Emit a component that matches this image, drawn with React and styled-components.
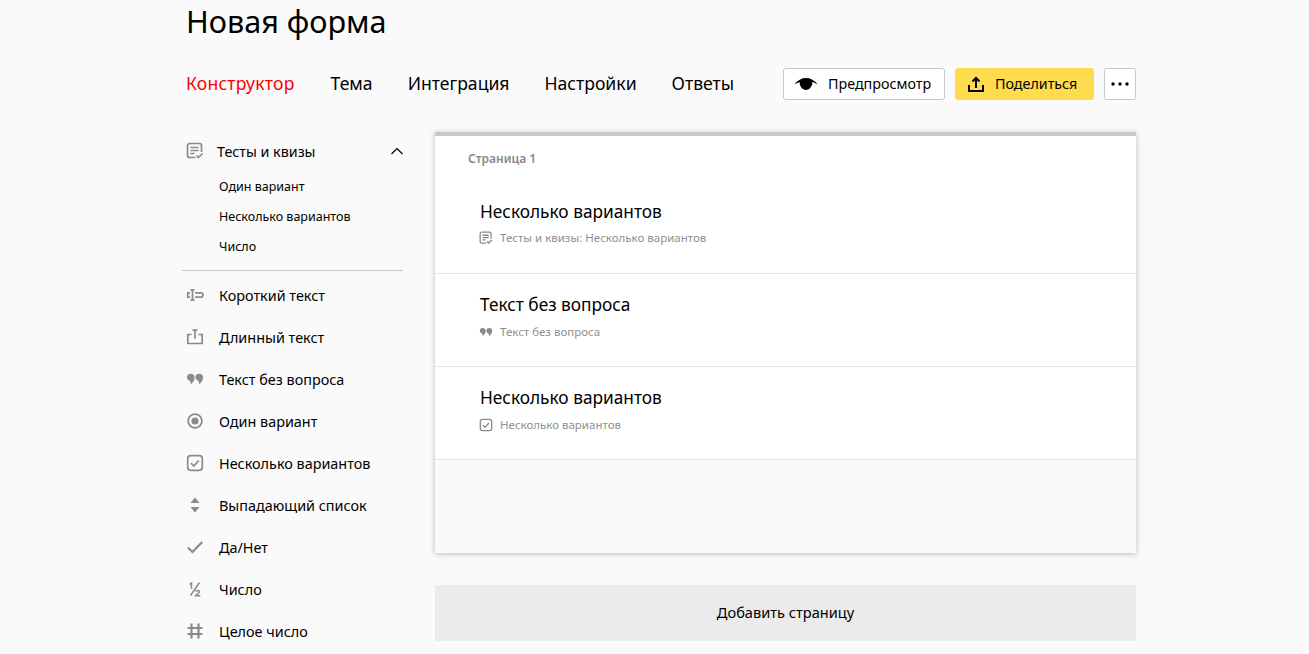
import React from 'react'
import styled, { createGlobalStyle } from 'styled-components'

const GlobalStyle = createGlobalStyle`
  html, body {
    margin: 0;
    padding: 0;
    height: 654px;
    overflow: hidden;
    background: #fafafa;
    font-family: "Noto Sans", "Open Sans", sans-serif;
    color: #000;
  }
  * { box-sizing: border-box; }
`

const Page = styled.div`
  width: 950px;
  margin-left: 186px;
`

const Title = styled.h1`
  margin: 0;
  padding-top: 1px;
  height: 68px;
  font-size: 30.6px;
  line-height: 40px;
  font-weight: 400;
`

const TopBar = styled.div`
  display: flex;
  align-items: center;
  justify-content: space-between;
  height: 32px;
`

const Tabs = styled.nav`
  display: flex;
  gap: 35px;
`

const Tab = styled.span`
  font-size: 17.6px;
  line-height: 30px;
  padding-bottom: 2px;
  color: ${p => (p.$active ? '#f00' : '#000')};
  letter-spacing: ${p => (p.$active ? '0.2px' : '0')};
  margin-right: ${p => (p.$active ? '1px' : '0')};
`

const Actions = styled.div`
  display: flex;
  gap: 10px;
`

const Button = styled.button`
  display: flex;
  align-items: center;
  height: 32px;
  width: ${p => p.$width}px;
  padding: 0 0 1px ${p => p.$pad}px;
  gap: ${p => p.$gap}px;
  font: inherit;
  font-size: 14.3px;
  color: #000;
  border-radius: 3px;
  border: ${p => (p.$primary ? 'none' : '1px solid #c8c8c8')};
  background: ${p => (p.$primary ? '#ffdb4d' : '#fff')};
`

const Columns = styled.div`
  display: flex;
  margin-top: 32px;
  margin-left: -4px;
  gap: 32px;
`

const Sidebar = styled.aside`
  width: 221px;
  flex: none;
`

const Group = styled.div`
  display: flex;
  align-items: center;
  height: 40px;
  padding: 0 0 2px 4px;
  font-size: 14.3px;
`

const GroupLabel = styled.span`
  flex: 1;
  margin-left: 13px;
`

const SubList = styled.div`
  padding: 0 0 8px 37px;
  border-bottom: 1px solid #c8c8c8;
  margin-bottom: 3px;
`

const SubItem = styled.div`
  height: 30px;
  font-size: 12.5px;
  line-height: 30px;
`

const Field = styled.div`
  display: flex;
  align-items: center;
  height: 42px;
  padding-left: 4px;
  font-size: 14.4px;
`

const FieldIcon = styled.span`
  display: flex;
  width: 18px;
  height: 18px;
  margin-right: 15px;
  flex: none;
`

const Main = styled.main`
  width: 701px;
  flex: none;
`

const Card = styled.section`
  height: 421px;
  background: #fafafa;
  border-top: 4px solid #c8c8c8;
  box-shadow: 0 1px 6px rgba(0, 0, 0, 0.25);
`

const CardHead = styled.div`
  height: 44px;
  padding: 14px 0 0 33px;
  background: #fff;
  font-size: 12px;
  line-height: 17px;
  font-weight: 600;
  color: #8a8a8a;
`

const Question = styled.div`
  height: ${p => (p.$first ? '93.5px' : '93px')};
  padding: ${p => (p.$first ? '20px' : '19px')} 0 0 45px;
  background: #fff;
  border-bottom: 1px solid #e5e5e5;
`

const QuestionTitle = styled.div`
  font-size: 17.3px;
  line-height: 24px;
`

const QuestionType = styled.div`
  display: flex;
  align-items: center;
  margin-top: ${p => (p.$first ? '5px' : '6px')};
  margin-left: -1px;
  font-size: 11.5px;
  line-height: 18px;
  color: #8f8f8f;
  gap: 7px;
`

const TypeIcon = styled.span`
  display: flex;
  width: 14px;
  height: 14px;
`

const AddPage = styled.div`
  display: flex;
  align-items: center;
  justify-content: center;
  height: 56px;
  margin-top: 32px;
  padding-bottom: 2px;
  background: #ebebeb;
  font-size: 14.6px;
`

const Chevron = styled.svg`
  margin-right: -1px;
`

const Dots = styled.svg`
  display: block;
`

const TestIcon = ({ size = 18 }) => (
  <svg width={size} height={size} viewBox="0 0 18 18" fill="none" stroke="#8a8a8a" strokeWidth="1.700">
    <path d="M9.500 15.500H3.500a2 2 0 0 1-2-2v-10a2 2 0 0 1 2-2h10a2 2 0 0 1 2 2V10" />
    <path d="M4.500 5.500h8M4.500 8.500h8M4.500 11.500h4" />
    <path d="M10.500 13.500l2 2 4-4" />
  </svg>
)

const ShortIcon = () => (
  <svg width="18" height="18" viewBox="0 0 18 18" fill="none" stroke="#8a8a8a" strokeWidth="1.700">
    <path d="M4.500 3.800h4M4.500 14.200h4M6.500 3.800v10.400" />
    <path d="M4 6.800H1.700v4.400H4" />
    <path d="M9 6.800h5.800a2.200 2.200 0 0 1 0 4.400H9" />
  </svg>
)

const LongIcon = () => (
  <svg width="18" height="18" viewBox="0 0 18 18" fill="none" stroke="#8a8a8a" strokeWidth="1.700">
    <path d="M5.500 6.500H1.800v9h14.400v-9h-3.700" />
    <path d="M6.500 2.200h5M9 2.200v8.500" />
  </svg>
)

const QuoteIcon = ({ size = 18 }) => (
  <svg width={size} height={size} viewBox="0 0 18 18" fill="#8a8a8a">
    <path d="M1 7.500a3.800 3.800 0 0 1 7.600 0c0 2.800-1.500 4.800-3.600 6.800-.4-1.600-.7-2.600-1.200-3.500C2.300 10.300 1 9.200 1 7.500z" />
    <path d="M9.400 7.500a3.800 3.800 0 0 1 7.600 0c0 2.800-1.500 4.800-3.600 6.800-.4-1.600-.7-2.600-1.200-3.500-1.500-.5-2.800-1.600-2.800-3.300z" />
  </svg>
)

const RadioIcon = () => (
  <svg width="18" height="18" viewBox="0 0 18 18" fill="none">
    <circle cx="9" cy="9" r="6.900" stroke="#8a8a8a" strokeWidth="1.700" />
    <circle cx="9" cy="9" r="3.600" fill="#8a8a8a" />
  </svg>
)

const CheckboxIcon = ({ size = 18 }) => (
  <svg width={size} height={size} viewBox="0 0 18 18" fill="none" stroke="#8a8a8a" strokeWidth="1.700">
    <rect x="1.700" y="1.700" width="14.600" height="14.600" rx="3" />
    <path d="M5 9.200l2.800 2.800 5-5.500" />
  </svg>
)

const SelectIcon = () => (
  <svg width="18" height="18" viewBox="0 0 18 18" fill="#8a8a8a">
    <path d="M9 1.500l4.500 5.500h-9zM9 16.500l-4.500-5.500h9z" />
  </svg>
)

const CheckIcon = () => (
  <svg width="18" height="18" viewBox="0 0 18 18" fill="none" stroke="#8a8a8a" strokeWidth="2.200">
    <path d="M1.800 9.500l4.700 4.500L16.200 4" />
  </svg>
)

const FractionIcon = () => (
  <svg width="18" height="18" viewBox="0 0 18 18" fill="none" stroke="#8a8a8a" strokeWidth="1.500">
    <path d="M3.500 4.500l2-1.500v6M13.500 2.500l-9 13" />
    <path d="M9.500 11.500c.5-1.500 4-1.500 4 .3 0 1.500-3 2.200-4 3.900h4.800" />
  </svg>
)

const HashIcon = () => (
  <svg width="18" height="18" viewBox="0 0 18 18" fill="none" stroke="#8a8a8a" strokeWidth="2.200">
    <path d="M5.500 1.500v15M12.500 1.500v15M1.500 6h15M1.500 12h15" />
  </svg>
)

const EyeIcon = () => (
  <svg width="24" height="14" viewBox="0 0 24 14">
    <path d="M1 6.500C4 3 8 1 12 1s8 2 11 5.500l-.3.6C20 5.400 18.800 5 18.300 5c.4 4-2.800 8-6.300 8S5.300 9 5.700 5C5 5.200 3.700 5.900 1.300 7.100z" fill="#000" />
  </svg>
)

const ShareIcon = () => (
  <svg width="16" height="16" viewBox="0 0 16 16" fill="none" stroke="#000" strokeWidth="2">
    <path d="M1 9v6h14V9" />
    <path d="M8 12V2.500" />
    <path d="M4.500 5.500L8 2l3.500 3.500" />
  </svg>
)

const subItems = ['Один вариант', 'Несколько вариантов', 'Число']

const fields = [
  { label: 'Короткий текст', icon: <ShortIcon /> },
  { label: 'Длинный текст', icon: <LongIcon /> },
  { label: 'Текст без вопроса', icon: <QuoteIcon /> },
  { label: 'Один вариант', icon: <RadioIcon /> },
  { label: 'Несколько вариантов', icon: <CheckboxIcon /> },
  { label: 'Выпадающий список', icon: <SelectIcon /> },
  { label: 'Да/Нет', icon: <CheckIcon /> },
  { label: 'Число', icon: <FractionIcon /> },
  { label: 'Целое число', icon: <HashIcon /> },
]

const questions = [
  { title: 'Несколько вариантов', type: 'Тесты и квизы: Несколько вариантов', icon: <TestIcon size={14} /> },
  { title: 'Текст без вопроса', type: 'Текст без вопроса', icon: <QuoteIcon size={14} /> },
  { title: 'Несколько вариантов', type: 'Несколько вариантов', icon: <CheckboxIcon size={14} /> },
]

const App = () => {
  return (
    <Page>
      <GlobalStyle />
      <Title>Новая форма</Title>
      <TopBar>
        <Tabs>
          <Tab $active>Конструктор</Tab>
          <Tab>Тема</Tab>
          <Tab>Интеграция</Tab>
          <Tab>Настройки</Tab>
          <Tab>Ответы</Tab>
        </Tabs>
        <Actions>
          <Button $width={162} $pad={10} $gap={10}><EyeIcon />Предпросмотр</Button>
          <Button $primary $width={139} $pad={13} $gap={11}><ShareIcon />Поделиться</Button>
          <Button $width={32} $pad={6} $gap={0}>
            <Dots width="18" height="4" viewBox="0 0 18 4" fill="#000">
              <circle cx="2" cy="2" r="1.700" />
              <circle cx="9" cy="2" r="1.700" />
              <circle cx="16" cy="2" r="1.700" />
            </Dots>
          </Button>
        </Actions>
      </TopBar>
      <Columns>
        <Sidebar>
          <Group>
            <TestIcon />
            <GroupLabel>Тесты и квизы</GroupLabel>
            <Chevron width="14" height="8" viewBox="0 0 14 8" fill="none" stroke="#000" strokeWidth="1.200">
              <path d="M1.500 7L7 1.500 12.500 7" />
            </Chevron>
          </Group>
          <SubList>
            {subItems.map(item => <SubItem key={item}>{item}</SubItem>)}
          </SubList>
          {fields.map(field => (
            <Field key={field.label}>
              <FieldIcon>{field.icon}</FieldIcon>
              {field.label}
            </Field>
          ))}
        </Sidebar>
        <Main>
          <Card>
            <CardHead>Страница 1</CardHead>
            {questions.map((q, i) => (
              <Question key={i} $first={i === 0}>
                <QuestionTitle>{q.title}</QuestionTitle>
                <QuestionType $first={i === 0}>
                  <TypeIcon>{q.icon}</TypeIcon>
                  {q.type}
                </QuestionType>
              </Question>
            ))}
          </Card>
          <AddPage>Добавить страницу</AddPage>
        </Main>
      </Columns>
    </Page>
  )
}

export default App
